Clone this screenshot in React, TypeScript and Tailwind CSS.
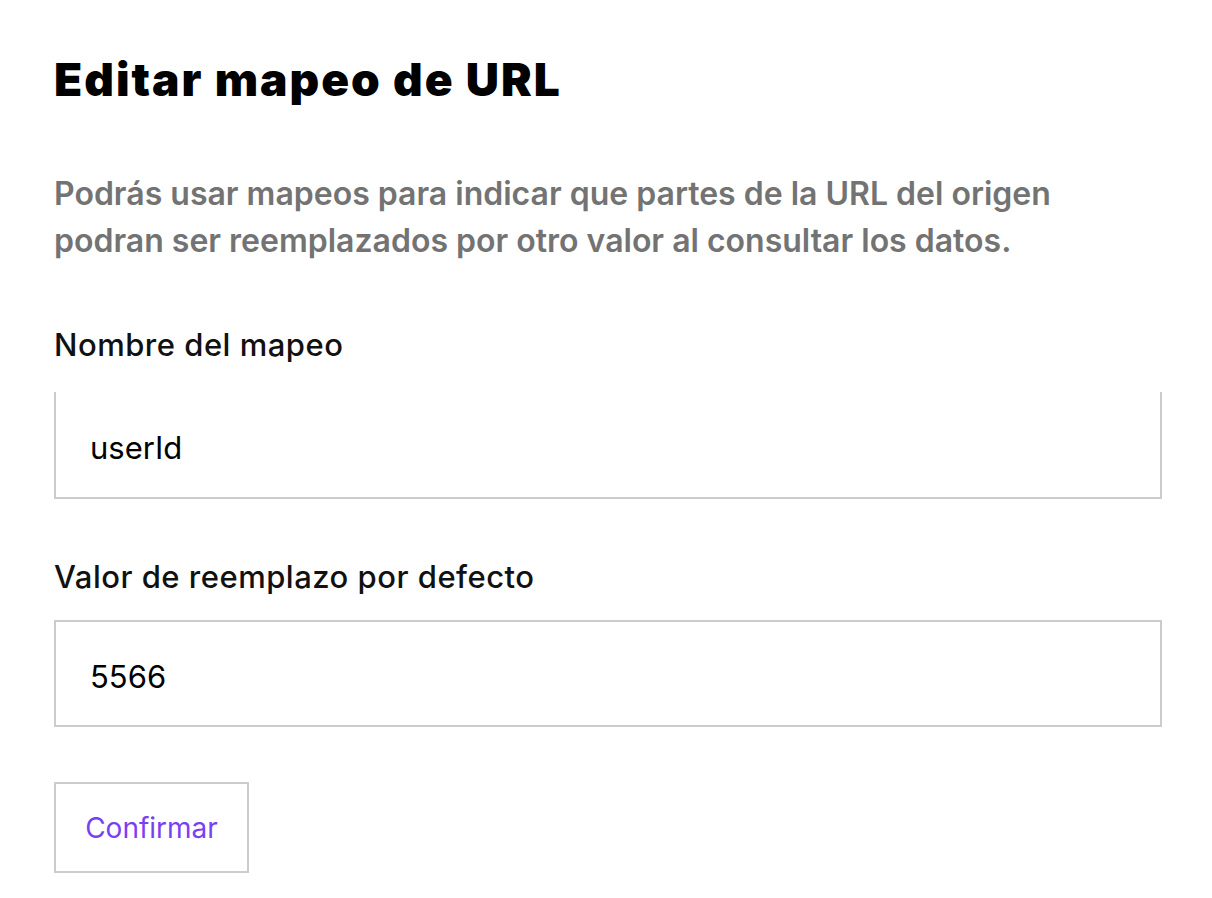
export default function App() {
  return (
    <div className="min-h-screen bg-white font-['Inter',sans-serif] text-black">
      <div className="w-[1108px] ml-[54px] pt-[54px]">
        <h1 className="text-[46px] leading-[50px] font-black tracking-[2px]">Editar mapeo de URL</h1>

        <p className="mt-[66px] text-[32px] leading-[47px] font-semibold text-[#737373]">
          Podrás usar mapeos para indicar que partes de la URL del origen
          <br />
          podran ser reemplazados por otro valor al consultar los datos.
        </p>

        <label className="block mt-[61px] text-[31px] leading-[40px] font-medium tracking-[0.5px] text-[#111]">Nombre del mapeo</label>
        <div className="mt-[27px] h-[107px] border-x-2 border-b-2 border-[#cccccc] flex items-center pl-[34px] pt-[8px] text-[31px]">
          userId
        </div>

        <label className="block mt-[58px] text-[31px] leading-[40px] font-medium tracking-[0.5px] text-[#111]">Valor de reemplazo por defecto</label>
        <div className="mt-[23px] h-[107px] border-2 border-[#cccccc] flex items-center pl-[34px] pt-[8px] text-[31px]">
          5566
        </div>

        <button className="mt-[55px] w-[195px] h-[91px] border-2 border-[#cccccc] text-[28px] text-[#7b3ff2] flex items-center justify-center">
          Confirmar
        </button>
      </div>
    </div>
  )
}
